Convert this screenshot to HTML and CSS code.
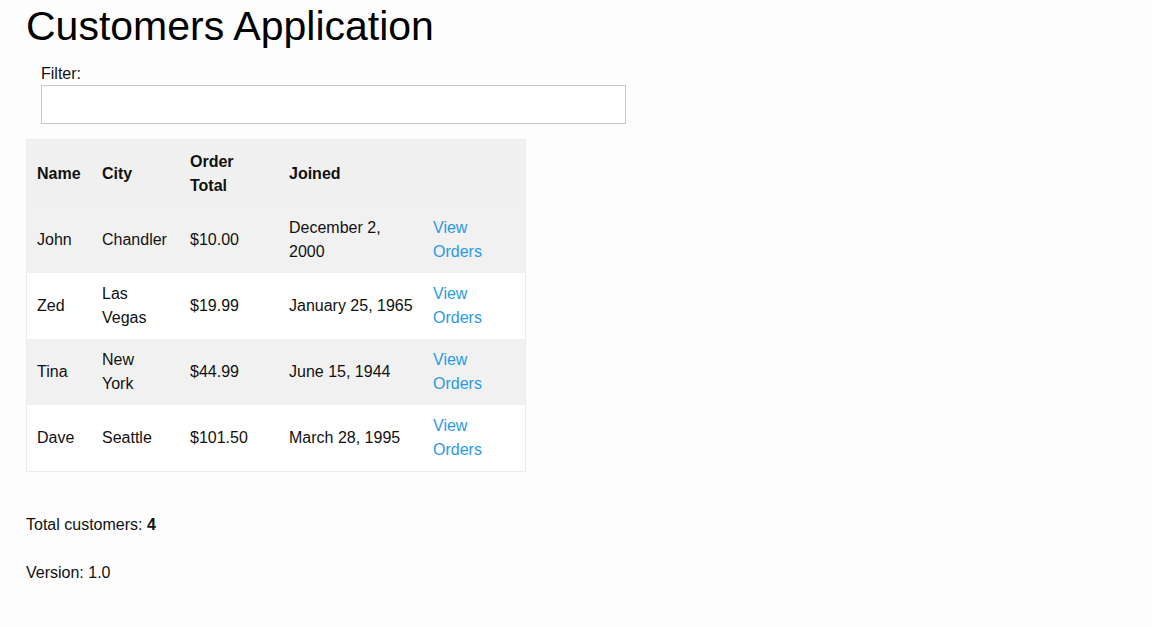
FILE: index.html
```html
<!DOCTYPE html>
<html>
<head>
<meta charset="utf-8">
<link rel="stylesheet" href="styles.css">
</head>
<body>
<div class="app">
  <h1 class="title">Customers Application</h1>
  <div class="filter">
    <label class="filter-label">Filter:</label>
    <input class="filter-input" type="text">
  </div>
  <table class="grid">
    <thead>
      <tr>
        <th class="c-name">Name</th>
        <th class="c-city">City</th>
        <th class="c-total">Order Total</th>
        <th class="c-joined">Joined</th>
        <th class="c-link"></th>
      </tr>
    </thead>
    <tbody>
      <tr><td>John</td><td>Chandler</td><td>$10.00</td><td>December 2, 2000</td><td><a href="#">View Orders</a></td></tr>
      <tr><td>Zed</td><td>Las Vegas</td><td>$19.99</td><td>January 25, 1965</td><td><a href="#">View Orders</a></td></tr>
      <tr><td>Tina</td><td>New York</td><td>$44.99</td><td>June 15, 1944</td><td><a href="#">View Orders</a></td></tr>
      <tr><td>Dave</td><td>Seattle</td><td>$101.50</td><td>March 28, 1995</td><td><a href="#">View Orders</a></td></tr>
    </tbody>
  </table>
  <p class="summary">Total customers: <strong>4</strong></p>
  <p class="version">Version: 1.0</p>
</div>
</body>
</html>
```
FILE: styles.css
```css
html, body {
  margin: 0;
  padding: 0;
  background: #fdfdfd;
  font-family: "Liberation Sans", Arial, Helvetica, sans-serif;
  font-size: 16px;
  line-height: 24px;
  color: #111;
}
.app {
  padding: 0 26px;
}
.title {
  margin: 0;
  padding-top: 3px;
  font-size: 41px;
  line-height: 46px;
  font-weight: normal;
  color: #000;
}
.filter {
  padding: 15px 15px 15px;
  display: flex;
  flex-direction: column;
  align-items: flex-start;
}
.filter-label {
  font-size: 16px;
  line-height: 20px;
  margin-bottom: 1px;
}
.filter-input {
  box-sizing: border-box;
  width: 585px;
  height: 39px;
  border: 1px solid #c8c8c8;
  background: #fff;
  margin: 0;
  padding: 4px 8px;
}
.grid {
  border-collapse: collapse;
  border: 1px solid #ececec;
  width: 500px;
  table-layout: fixed;
}
.grid th, .grid td {
  text-align: left;
  vertical-align: middle;
  padding: 9px 10px 9px 10px;
  height: 48px;
}
.grid th {
  font-weight: bold;
  background: #f0f0f0;
  padding-top: 10px;
  padding-bottom: 9px;
}
.grid th:nth-child(2), .grid td:nth-child(2) { padding-right: 11px; }
.c-name { width: 45px; }
.c-city { width: 67px; }
.c-total { width: 79px; }
.c-joined { width: 124px; }
.c-link { width: 82px; }
.grid tbody tr:nth-child(odd) td { background: #f1f1f1; }
.grid tbody tr:nth-child(even) td { background: #fff; }
.grid a {
  color: #2a9ae6;
  text-decoration: none;
}
.summary {
  margin: 41px 0 0;
}
.version {
  margin: 24px 0 0;
}
```
